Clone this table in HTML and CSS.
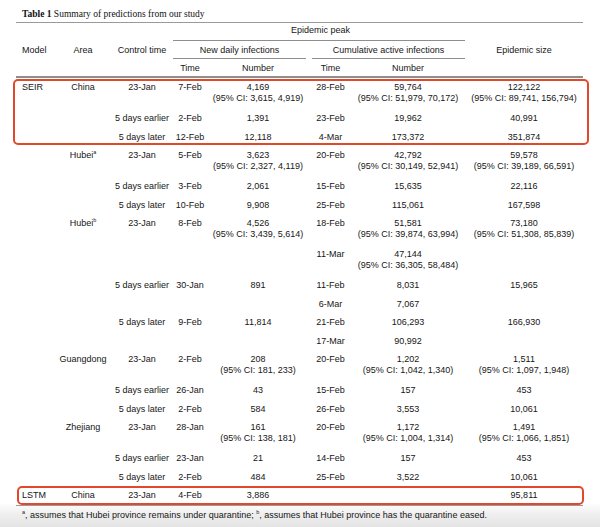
FILE: index.html
```html
<!DOCTYPE html>
<html lang="en">
<head>
<meta charset="utf-8">
<title>Table 1 Summary of predictions from our study</title>
<link rel="stylesheet" href="styles.css">
</head>
<body>
<div class="page">
  <div class="caption"><b>Table 1</b> Summary of predictions from our study</div>
  <div class="table-wrap">
    <table class="data">
      <colgroup>
        <col class="c1"><col class="c2"><col class="c3"><col class="c4"><col class="c5"><col class="c6"><col class="c7"><col class="c8">
      </colgroup>
      <thead>
        <tr>
          <th rowspan="3" class="hb left">Model</th>
          <th rowspan="3" class="hb">Area</th>
          <th rowspan="3" class="hb">Control time</th>
          <th colspan="4" class="grp"><div class="u u-peak">Epidemic peak</div></th>
          <th rowspan="3" class="hb">Epidemic size</th>
        </tr>
        <tr>
          <th colspan="2" class="grp"><div class="u u-ndi">New daily infections</div></th>
          <th colspan="2" class="grp"><div class="u u-cai">Cumulative active infections</div></th>
        </tr>
        <tr class="sub">
          <th class="hb">Time</th>
          <th class="hb">Number</th>
          <th class="hb">Time</th>
          <th class="hb pr">Number</th>
        </tr>
      </thead>
      <tbody>
        <tr class="ci">
          <td class="left">SEIR</td><td>China</td><td>23-Jan</td><td>7-Feb</td>
          <td>4,169<span class="l">(95% CI: 3,615, 4,919)</span></td>
          <td>28-Feb</td>
          <td class="pr">59,764<span class="l">(95% CI: 51,979, 70,172)</span></td>
          <td>122,122<span class="l">(95% CI: 89,741, 156,794)</span></td>
        </tr>
        <tr><td class="left"></td><td></td><td>5 days earlier</td><td>2-Feb</td><td>1,391</td><td>23-Feb</td><td class="pr">19,962</td><td>40,991</td></tr>
        <tr><td class="left"></td><td></td><td>5 days later</td><td>12-Feb</td><td>12,118</td><td>4-Mar</td><td class="pr">173,372</td><td>351,874</td></tr>
        <tr class="ci">
          <td class="left"></td><td>Hubei<sup>a</sup></td><td>23-Jan</td><td>5-Feb</td>
          <td>3,623<span class="l">(95% CI: 2,327, 4,119)</span></td>
          <td>20-Feb</td>
          <td class="pr">42,792<span class="l">(95% CI: 30,149, 52,941)</span></td>
          <td>59,578<span class="l">(95% CI: 39,189, 66,591)</span></td>
        </tr>
        <tr><td class="left"></td><td></td><td>5 days earlier</td><td>3-Feb</td><td>2,061</td><td>15-Feb</td><td class="pr">15,635</td><td>22,116</td></tr>
        <tr><td class="left"></td><td></td><td>5 days later</td><td>10-Feb</td><td>9,908</td><td>25-Feb</td><td class="pr">115,061</td><td>167,598</td></tr>
        <tr class="ci">
          <td class="left"></td><td>Hubei<sup>b</sup></td><td>23-Jan</td><td>8-Feb</td>
          <td>4,526<span class="l">(95% CI: 3,439, 5,614)</span></td>
          <td>18-Feb</td>
          <td class="pr">51,581<span class="l">(95% CI: 39,874, 63,994)</span></td>
          <td>73,180<span class="l">(95% CI: 51,308, 85,839)</span></td>
        </tr>
        <tr class="ci">
          <td class="left"></td><td></td><td></td><td></td><td></td>
          <td>11-Mar</td>
          <td class="pr">47,144<span class="l">(95% CI: 36,305, 58,484)</span></td>
          <td></td>
        </tr>
        <tr><td class="left"></td><td></td><td>5 days earlier</td><td>30-Jan</td><td>891</td><td>11-Feb</td><td class="pr">8,031</td><td>15,965</td></tr>
        <tr><td class="left"></td><td></td><td></td><td></td><td></td><td>6-Mar</td><td class="pr">7,067</td><td></td></tr>
        <tr><td class="left"></td><td></td><td>5 days later</td><td>9-Feb</td><td>11,814</td><td>21-Feb</td><td class="pr">106,293</td><td>166,930</td></tr>
        <tr><td class="left"></td><td></td><td></td><td></td><td></td><td>17-Mar</td><td class="pr">90,992</td><td></td></tr>
        <tr class="ci">
          <td class="left"></td><td>Guangdong</td><td>23-Jan</td><td>2-Feb</td>
          <td>208<span class="l">(95% CI: 181, 233)</span></td>
          <td>20-Feb</td>
          <td class="pr">1,202<span class="l">(95% CI: 1,042, 1,340)</span></td>
          <td>1,511<span class="l">(95% CI: 1,097, 1,948)</span></td>
        </tr>
        <tr><td class="left"></td><td></td><td>5 days earlier</td><td>26-Jan</td><td>43</td><td>15-Feb</td><td class="pr">157</td><td>453</td></tr>
        <tr><td class="left"></td><td></td><td>5 days later</td><td>2-Feb</td><td>584</td><td>26-Feb</td><td class="pr">3,553</td><td>10,061</td></tr>
        <tr class="ci">
          <td class="left"></td><td>Zhejiang</td><td>23-Jan</td><td>28-Jan</td>
          <td>161<span class="l">(95% CI: 138, 181)</span></td>
          <td>20-Feb</td>
          <td class="pr">1,172<span class="l">(95% CI: 1,004, 1,314)</span></td>
          <td>1,491<span class="l">(95% CI: 1,066, 1,851)</span></td>
        </tr>
        <tr><td class="left"></td><td></td><td>5 days earlier</td><td>23-Jan</td><td>21</td><td>14-Feb</td><td class="pr">157</td><td>453</td></tr>
        <tr><td class="left"></td><td></td><td>5 days later</td><td>2-Feb</td><td>484</td><td>25-Feb</td><td class="pr">3,522</td><td>10,061</td></tr>
        <tr class="last"><td class="left">LSTM</td><td>China</td><td>23-Jan</td><td>4-Feb</td><td>3,886</td><td></td><td class="pr"></td><td>95,811</td></tr>
      </tbody>
    </table>
    <div class="hl hl-top"></div>
    <div class="hl hl-lstm"></div>
  </div>
  <p class="foot"><sup>a</sup>, assumes that Hubei province remains under quarantine; <sup>b</sup>, assumes that Hubei province has the quarantine eased.</p>
</div>
</body>
</html>
```

FILE: styles.css
```css
html {
  background: linear-gradient(to bottom, #ffffff 0, #ffffff 503px, #efefef 514px, #e4e4e4 527px);
  min-height: 527px;
}
body {
  margin: 0;
  font-family: "Liberation Sans", Arial, Helvetica, sans-serif;
  font-size: 9px;
  color: #161616;
}
.page {
  width: 567px;
  padding-left: 16px;
}
.caption {
  font-family: "Liberation Serif", "Times New Roman", serif;
  font-size: 9.5px;
  color: #111;
  height: 22px;
  line-height: 12px;
  padding-top: 8px;
  box-sizing: border-box;
  padding-left: 6px;
}
.caption b { font-weight: bold; }
.table-wrap {
  position: relative;
}
.data {
  width: 567px;
  table-layout: fixed;
  border-collapse: separate;
  border-spacing: 0;
  border-top: 1px solid #9a9a9a;
}
.c1 { width: 36px; }
.c2 { width: 62px; }
.c3 { width: 56px; }
.c4 { width: 40px; }
.c5 { width: 96px; }
.c6 { width: 49px; }
.c7 { width: 110px; }
.c8 { width: 118px; }
th {
  font-weight: normal;
  padding: 0;
  text-align: center;
  vertical-align: middle;
  white-space: nowrap;
}
th.left, td.left {
  text-align: left;
  padding-left: 6px;
}
th.hb {
  border-bottom: 2px solid #8e8e8e;
}
thead tr.sub th {
  line-height: 15px;
  padding-top: 2px;
}
th.grp {
  vertical-align: top;
}
.u {
  line-height: 15px;
  border-bottom: 1px solid #8e8e8e;
  white-space: nowrap;
}
.u-peak {
  padding-bottom: 2px;
  margin-left: 3px;
  padding-left: 3px;
}
.u-ndi {
  padding-top: 2px;
  margin-left: 3px;
}
.u-cai {
  padding-top: 2px;
  margin-left: 6px;
}
td {
  padding: 4px 0;
  line-height: 10.5px;
  text-align: center;
  vertical-align: top;
  white-space: nowrap;
}
.pr { padding-right: 4px; }
tr.ci td { padding-bottom: 6px; }
tr.last td { border-bottom: 1px solid #9a9a9a; }
.l { display: block; }
sup {
  font-size: 5.5px;
  line-height: 0;
  vertical-align: 4px;
}
.hl {
  position: absolute;
  box-sizing: border-box;
  border: 2px solid #e2492c;
  border-radius: 5px;
}
.hl-top {
  top: 57px;
  left: -3px;
  width: 576px;
  height: 66px;
}
.hl-lstm {
  top: 464px;
  left: 1px;
  width: 567px;
  height: 19px;
}
.foot {
  margin: 4px 0 0;
  padding-left: 6px;
  line-height: 10px;
  font-size: 9px;
}
.foot sup {
  font-size: 5.5px;
}
```
